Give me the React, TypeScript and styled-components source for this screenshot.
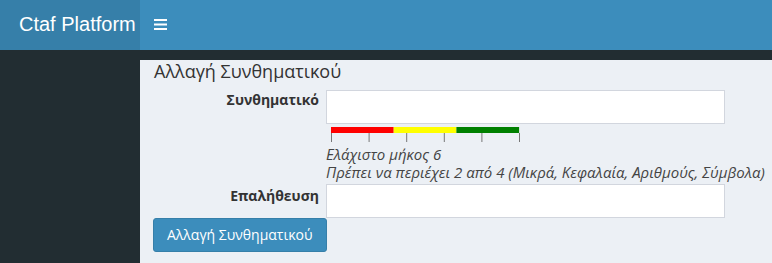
import React, { FC } from 'react'
import styled, { createGlobalStyle } from 'styled-components'

const GlobalStyle = createGlobalStyle`
  html, body {
    margin: 0;
    padding: 0;
    background: #ecf0f5;
  }
  body {
    font-family: "Open Sans", "Liberation Sans", sans-serif;
    font-size: 14px;
    color: #333;
  }
  * {
    box-sizing: border-box;
  }
`

const TICKS = [0, 1, 2, 3, 4, 5]
const SEGMENTS = ['#ff0000', '#ffff00', '#008000']

const StrengthMeter: FC = () => {
  const width = 189
  return (
    <StyledMeter width={width} height={16} viewBox={`0 0 ${width} 16`}>
      {SEGMENTS.map((color, index) => (
        <rect key={color} x={index * 62.7} y={0} width={62.7} height={6} fill={color} />
      ))}
      {TICKS.map(tick => {
        const x = Math.min(0.5 + tick * 37.6, width - 0.5)
        return <line key={tick} x1={x} x2={x} y1={6} y2={15} stroke="#777" strokeWidth={1} />
      })}
    </StyledMeter>
  )
}

const MenuIcon: FC = () => (
  <svg width="13" height="11" viewBox="0 0 13 11">
    <rect x="0" y="0" width="13" height="2" fill="#fff" />
    <rect x="0" y="4.5" width="13" height="2" fill="#fff" />
    <rect x="0" y="9" width="13" height="2" fill="#fff" />
  </svg>
)

const App: FC = () => {
  return (
    <>
      <GlobalStyle />
      <StyledPage>
        <StyledHeader>
          <StyledLogo>Ctaf Platform</StyledLogo>
          <StyledNavbar>
            <StyledToggle>
              <MenuIcon />
            </StyledToggle>
          </StyledNavbar>
        </StyledHeader>
        <StyledBody>
          <StyledSidebar />
          <StyledContent>
            <StyledTitle>Αλλαγή Συνθηματικού</StyledTitle>
            <StyledForm>
              <StyledLabel>Συνθηματικό</StyledLabel>
              <StyledField>
                <StyledInput type="password" />
                <StyledMeterWrap>
                  <StrengthMeter />
                </StyledMeterWrap>
                <StyledHelp>
                  <div>Ελάχιστο μήκος 6</div>
                  <div>Πρέπει να περιέχει 2 από 4 (Μικρά, Κεφαλαία, Αριθμούς, Σύμβολα)</div>
                </StyledHelp>
              </StyledField>
              <StyledLabel offset={5}>Επαλήθευση</StyledLabel>
              <StyledField offset={3}>
                <StyledInput type="password" />
              </StyledField>
            </StyledForm>
            <StyledButton type="button">Αλλαγή Συνθηματικού</StyledButton>
          </StyledContent>
        </StyledBody>
      </StyledPage>
    </>
  )
}

const StyledPage = styled.div`
  display: flex;
  flex-direction: column;
  min-height: 263px;
`

const StyledHeader = styled.header`
  display: flex;
  height: 50px;
`

const StyledLogo = styled.div`
  width: 140px;
  flex-shrink: 0;
  display: flex;
  align-items: center;
  padding-left: 19px;
  background: #367fa9;
  color: #fff;
  font-family: "Liberation Sans", Arial, sans-serif;
  font-size: 20px;
  white-space: nowrap;
  padding-bottom: 1px;
`

const StyledNavbar = styled.nav`
  flex: 1;
  display: flex;
  align-items: center;
  background: #3c8dbc;
`

const StyledToggle = styled.div`
  display: flex;
  align-items: center;
  padding: 0 0 0 14px;
  margin-top: -2px;
`

const StyledBody = styled.div`
  flex: 1;
  display: flex;
  background: #222d32;
`

const StyledSidebar = styled.aside`
  width: 140px;
  flex-shrink: 0;
`

const StyledContent = styled.main`
  flex: 1;
  margin-top: 10px;
  background: #ecf0f5;
  padding: 1px 0 12px 12px;
`

const StyledTitle = styled.h1`
  margin: 0 0 0 2px;
  font-size: 18px;
  line-height: 20px;
  font-weight: 400;
  color: #333;
`

const StyledForm = styled.div`
  display: grid;
  grid-template-columns: 167px 399px;
  column-gap: 7px;
  margin-top: 9px;
`

const StyledLabel = styled.label<{ offset?: number }>`
  text-align: right;
  font-weight: 700;
  font-size: 14px;
  line-height: 20px;
  margin-top: ${p => p.offset ?? 0}px;
  color: #333;
`

const StyledField = styled.div<{ offset?: number }>`
  display: flex;
  flex-direction: column;
  margin-top: ${p => p.offset ?? 0}px;
`

const StyledInput = styled.input`
  width: 399px;
  height: 34px;
  border: 1px solid #d2d6de;
  background: #fff;
  border-radius: 0;
  padding: 6px 12px;
  font-size: 14px;
  &:focus {
    outline: none;
    border-color: #3c8dbc;
  }
`

const StyledMeterWrap = styled.div`
  padding: 3px 0 0 5px;
  display: flex;
`

const StyledMeter = styled.svg`
  display: block;
`

const StyledHelp = styled.div`
  margin-top: 2px;
  font-style: italic;
  font-size: 15px;
  line-height: 18px;
  color: #444;
  white-space: nowrap;
`

const StyledButton = styled.button`
  display: block;
  margin: 0 0 0 1px;
  height: 34px;
  padding: 6px 13px;
  background: #3c8dbc;
  border: 1px solid #367fa9;
  border-radius: 3px;
  color: #fff;
  font-family: "Open Sans", "Liberation Sans", sans-serif;
  font-size: 14px;
  line-height: 20px;
  cursor: pointer;
`

export default App
